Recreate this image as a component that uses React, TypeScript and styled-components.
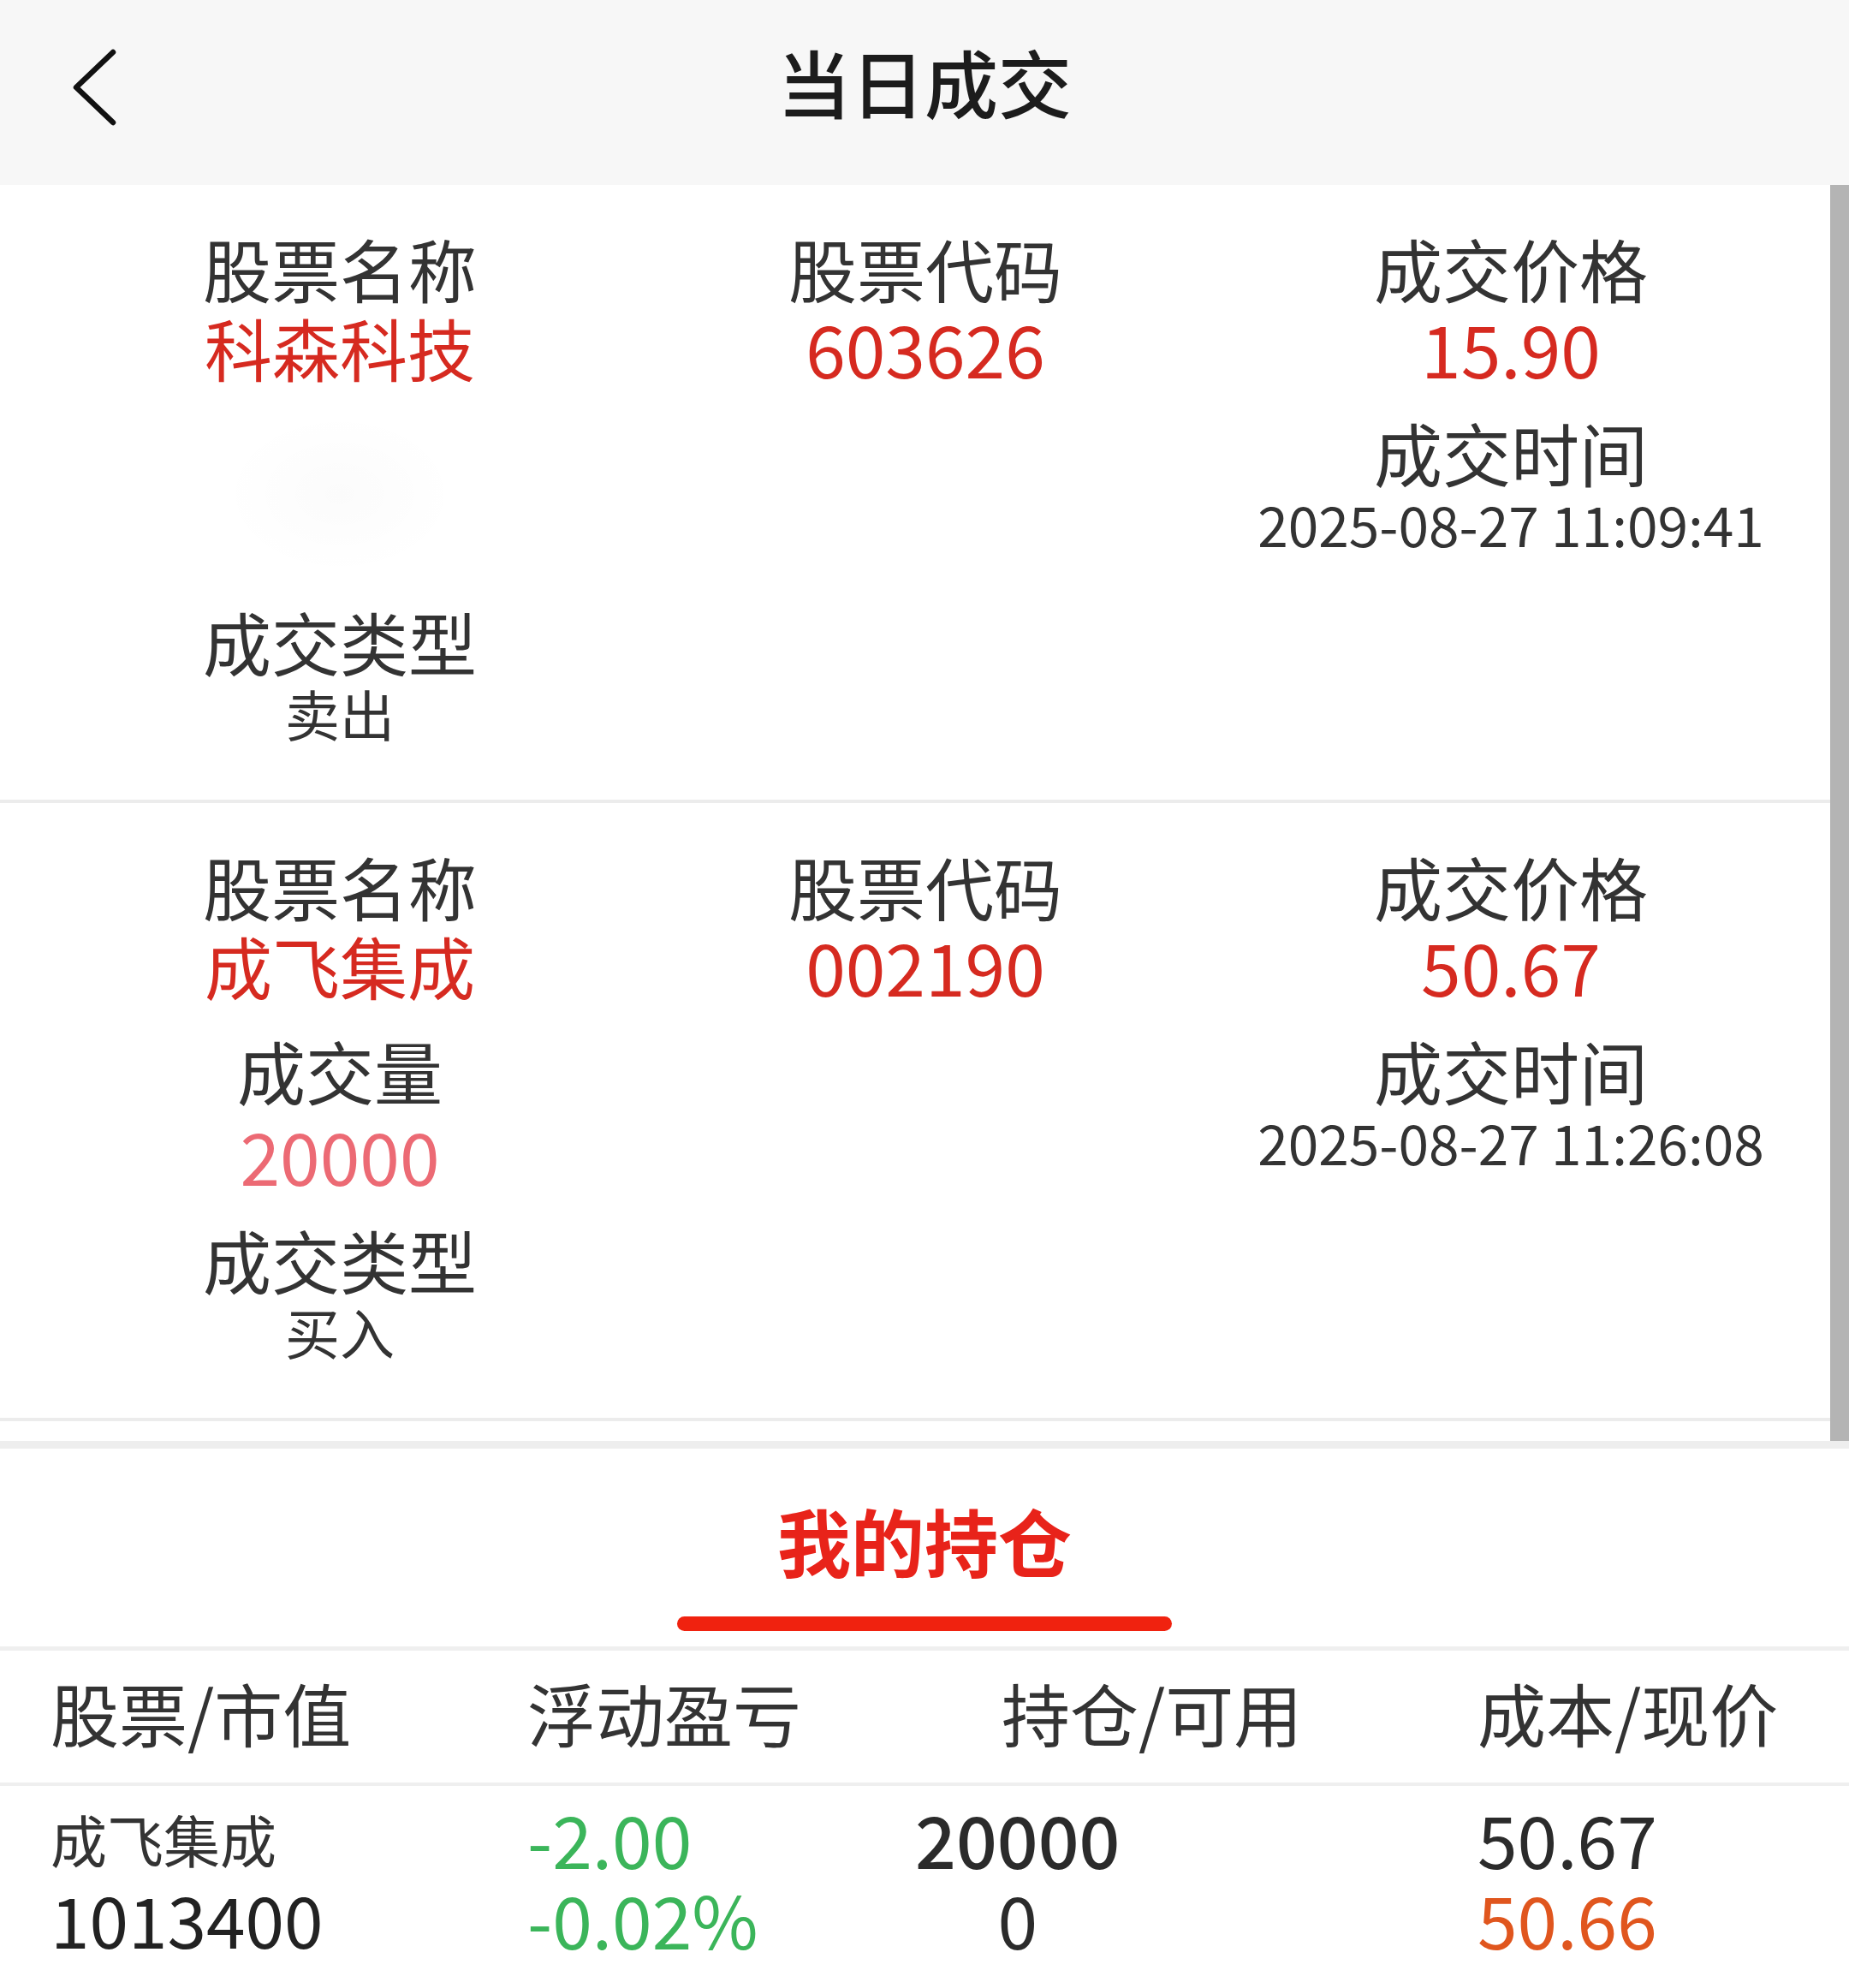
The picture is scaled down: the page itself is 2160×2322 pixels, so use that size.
import styled, { createGlobalStyle } from 'styled-components';

const GlobalStyle = createGlobalStyle`
	html, body {
		margin: 0;
		padding: 0;
		background: #fff;
	}
	body {
		font-family: "Noto Sans CJK SC", "Noto Sans", sans-serif;
		color: #333;
	}
`;

interface Field {
	label: string;
	value?: string;
	tone?: 'red' | 'redText' | 'pink' | 'plain' | 'small';
	hidden?: boolean;
}

interface Trade {
	id: string;
	columns: Field[][];
}

const trades: Trade[] = [
	{
		id: 't1',
		columns: [
			[
				{ label: '股票名称', value: '科森科技', tone: 'redText' },
				{ label: '成交量', value: '', hidden: true },
				{ label: '成交类型', value: '卖出', tone: 'small' },
			],
			[ { label: '股票代码', value: '603626', tone: 'red' } ],
			[
				{ label: '成交价格', value: '15.90', tone: 'red' },
				{ label: '成交时间', value: '2025-08-27 11:09:41', tone: 'small' },
			],
		],
	},
	{
		id: 't2',
		columns: [
			[
				{ label: '股票名称', value: '成飞集成', tone: 'redText' },
				{ label: '成交量', value: '20000', tone: 'pink' },
				{ label: '成交类型', value: '买入', tone: 'small' },
			],
			[ { label: '股票代码', value: '002190', tone: 'red' } ],
			[
				{ label: '成交价格', value: '50.67', tone: 'red' },
				{ label: '成交时间', value: '2025-08-27 11:26:08', tone: 'small' },
			],
		],
	},
];

const Page = styled.div`
	width: 2160px;
	height: 2322px;
	overflow: hidden;
	background: #fff;
`;

const Header = styled.header`
	height: 216px;
	box-sizing: border-box;
	background: #f7f7f7;
	display: grid;
	grid-template-columns: 1fr auto 1fr;
	align-items: center;
	padding-bottom: 26px;
`;

const BackButton = styled.button`
	justify-self: start;
	border: none;
	background: none;
	padding: 0;
	margin: 14px 0 0 83px;
	display: flex;
	cursor: pointer;
`;

const Title = styled.h1`
	margin: 0;
	font-size: 86px;
	line-height: 110px;
	font-weight: 500;
	color: #1c1c1c;
`;

const ScrollArea = styled.div`
	height: 1467px;
	display: flex;
`;

const TradeList = styled.div`
	flex: 1;
	min-width: 0;
`;

const Scrollbar = styled.div`
	width: 22px;
	background: #b4b4b4;
`;

const TradeCard = styled.div`
	display: grid;
	grid-template-columns: repeat( 3, 1fr );
	padding: 49px 31px 65px 55px;
	border-bottom: 4px solid #ececec;
`;

const FieldColumn = styled.div`
	display: flex;
	flex-direction: column;
	align-items: center;
	gap: 27px;
`;

const FieldBlock = styled.div`
	display: flex;
	flex-direction: column;
	align-items: center;
`;

const Label = styled.div`
	font-size: 80px;
	line-height: 94px;
	color: #333;
	white-space: nowrap;
`;

const Value = styled.div< { $tone: string } >`
	white-space: nowrap;
	color: ${ ( p ) =>
		p.$tone === 'red' || p.$tone === 'redText'
			? '#d62a20'
			: p.$tone === 'pink'
			? '#ec6a74'
			: '#333' };
	font-size: ${ ( p ) =>
		p.$tone === 'small' ? '64px' : p.$tone === 'redText' ? '79px' : '84px' };
	line-height: ${ ( p ) => ( p.$tone === 'small' ? '74px' : '94px' ) };
	margin-top: ${ ( p ) => ( p.$tone === 'pink' ? '6px' : '0' ) };
`;

const Redacted = styled.div`
	width: 280px;
	height: 194px;
	border-radius: 90px;
	background: radial-gradient(
		ellipse at center,
		rgba( 0, 0, 0, 0.016 ) 0%,
		rgba( 0, 0, 0, 0 ) 70%
	);
`;

const SectionGap = styled.div`
	height: 9px;
	background: #eeeeee;
`;

const TabBar = styled.div`
	display: flex;
	flex-direction: column;
	align-items: center;
	padding: 57px 0 18px;
	border-bottom: 5px solid #efefef;
`;

const TabText = styled.div`
	font-size: 86px;
	line-height: 100px;
	font-weight: 700;
	color: #e8231a;
`;

const TabUnderline = styled.div`
	width: 578px;
	height: 17px;
	margin-top: 39px;
	border-radius: 9px;
	background: #f0220f;
`;

const TableRow = styled.div< { $head?: boolean } >`
	display: grid;
	grid-template-columns: 557px 453px 657px 1fr;
	padding-left: 59px;
	align-items: center;
	${ ( p ) =>
		p.$head
			? `height: 154px; border-bottom: 4px solid #efefef;`
			: `padding-top: 14px;` }
`;

const HeadCell = styled.div< { $indent?: number } >`
	font-size: 80px;
	line-height: 100px;
	color: #333;
	white-space: nowrap;
	padding-left: ${ ( p ) => p.$indent ?? 0 }px;
	margin-top: -12px;
`;

const Stack = styled.div< { $center?: boolean } >`
	display: inline-flex;
	flex-direction: column;
	align-items: ${ ( p ) => ( p.$center ? 'center' : 'flex-start' ) };
	justify-self: start;
`;

const Cell = styled.div< { $color?: string; $size?: number; $weight?: number } >`
	font-size: ${ ( p ) => p.$size ?? 84 }px;
	line-height: 94px;
	font-weight: ${ ( p ) => p.$weight ?? 400 };
	color: ${ ( p ) => p.$color ?? '#2b2b2b' };
	white-space: nowrap;
`;

function BackIcon() {
	return (
		<svg width="56" height="92" viewBox="0 0 56 92" fill="none">
			<polyline
				points="49,5 6,46 49,87"
				stroke="#111"
				strokeWidth="6.5"
				strokeLinecap="round"
				strokeLinejoin="round"
			/>
		</svg>
	);
}

export default function App() {
	return (
		<Page>
			<GlobalStyle />
			<Header>
				<BackButton aria-label="返回">
					<BackIcon />
				</BackButton>
				<Title>当日成交</Title>
				<div />
			</Header>

			<ScrollArea>
				<TradeList>
					{ trades.map( ( trade ) => (
						<TradeCard key={ trade.id }>
							{ trade.columns.map( ( col, ci ) => (
								<FieldColumn key={ ci }>
									{ col.map( ( f ) =>
										f.hidden ? (
											<Redacted key={ f.label } />
										) : (
											<FieldBlock key={ f.label }>
												<Label>{ f.label }</Label>
												<Value $tone={ f.tone ?? 'plain' }>
													{ f.value }
												</Value>
											</FieldBlock>
										)
									) }
								</FieldColumn>
							) ) }
						</TradeCard>
					) ) }
				</TradeList>
				<Scrollbar />
			</ScrollArea>

			<SectionGap />

			<TabBar>
				<TabText>我的持仓</TabText>
				<TabUnderline />
			</TabBar>

			<TableRow $head>
				<HeadCell>股票/市值</HeadCell>
				<HeadCell>浮动盈亏</HeadCell>
				<HeadCell $indent={ 101 }>持仓/可用</HeadCell>
				<HeadCell>成本/现价</HeadCell>
			</TableRow>

			<TableRow>
				<Stack>
					<Cell $size={ 66 } $color="#333">
						成飞集成
					</Cell>
					<Cell $size={ 82 } $color="#222">
						1013400
					</Cell>
				</Stack>
				<Stack>
					<Cell $color="#3bb55a">-2.00</Cell>
					<Cell $color="#3bb55a">-0.02%</Cell>
				</Stack>
				<Stack $center>
					<Cell $weight={ 500 }>20000</Cell>
					<Cell>0</Cell>
				</Stack>
				<Stack>
					<Cell>50.67</Cell>
					<Cell $color="#e0561e">50.66</Cell>
				</Stack>
			</TableRow>
		</Page>
	);
}
